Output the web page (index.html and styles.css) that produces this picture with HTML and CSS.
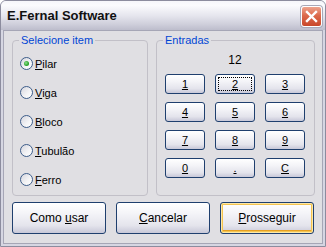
FILE: index.html
```html
<!DOCTYPE html>
<html lang="pt-BR">
<head>
    <meta charset="UTF-8">
    <meta name="viewport" content="width=device-width, initial-scale=1.0">
    <title>E.Fernal Software</title>
    <link rel="stylesheet" href="styles.css">
</head>
<body>
    <div class="window">
        <div class="titlebar">
            <span class="title">E.Fernal Software</span>
            <span class="close">
                <svg width="13" height="13" viewBox="0 0 13 13">
                    <path d="M2 2 L11 11 M11 2 L2 11" stroke="#fff" stroke-width="2.4" stroke-linecap="square" fill="none"/>
                </svg>
            </span>
        </div>
        <div class="client">
            <div class="groups">
                <fieldset class="group items">
                    <legend>Selecione item</legend>
                    <label class="radio checked"><span class="circle"></span><span><u>P</u>ilar</span></label>
                    <label class="radio"><span class="circle"></span><span><u>V</u>iga</span></label>
                    <label class="radio"><span class="circle"></span><span><u>B</u>loco</span></label>
                    <label class="radio"><span class="circle"></span><span><u>T</u>ubulão</span></label>
                    <label class="radio"><span class="circle"></span><span><u>F</u>erro</span></label>
                </fieldset>
                <fieldset class="group entries">
                    <legend>Entradas</legend>
                    <div class="display">12</div>
                    <div class="keypad">
                        <button class="key"><u>1</u></button>
                        <button class="key focused"><u>2</u></button>
                        <button class="key"><u>3</u></button>
                        <button class="key"><u>4</u></button>
                        <button class="key"><u>5</u></button>
                        <button class="key"><u>6</u></button>
                        <button class="key"><u>7</u></button>
                        <button class="key"><u>8</u></button>
                        <button class="key"><u>9</u></button>
                        <button class="key"><u>0</u></button>
                        <button class="key"><u>.</u></button>
                        <button class="key"><u>C</u></button>
                    </div>
                </fieldset>
            </div>
            <div class="actions">
                <button class="btn">Como <u>u</u>sar</button>
                <button class="btn"><u>C</u>ancelar</button>
                <button class="btn default"><u>P</u>rosseguir</button>
            </div>
        </div>
    </div>
</body>
</html>
```

FILE: styles.css
```css
body {
    margin: 0;
    font-family: "Liberation Sans", Arial, sans-serif;
    font-size: 11px;
    color: #000;
}
.window {
    width: 326px;
    height: 247px;
    box-sizing: border-box;
    border: 1px solid #8c8c9e;
    border-radius: 6px 6px 0 0;
    background: #d6d6e2;
    display: flex;
    flex-direction: column;
}
.titlebar {
    height: 29px;
    flex: none;
    display: flex;
    align-items: center;
    justify-content: space-between;
    padding: 0 3px 0 6px;
    border-radius: 5px 5px 0 0;
    background: linear-gradient(to bottom, #f6f6fa 0, #fbfbfd 15%, #e6e6ee 50%, #cfcfdb 80%, #bdbdcc 100%);
}
.title {
    font-size: 13px;
    font-weight: bold;
    color: #111;
}
.close {
    width: 19px;
    height: 19px;
    border: 1px solid #fff;
    border-radius: 3px;
    box-shadow: 0 0 0 1px #a8a8b8;
    background: linear-gradient(to bottom, #eea48e 0, #dc6a4c 45%, #c9472a 100%);
    display: flex;
    align-items: center;
    justify-content: center;
    margin-top: 1px;
}
.client {
    flex: 1;
    margin: 0 2px 2px;
    border: 1px solid #a6a6b6;
    background: #e0dfe3;
    padding: 2px 7px 0 8px;
}
.groups {
    display: flex;
    gap: 8px;
}
.group {
    margin: 0;
    border: 1px solid #c2c0c8;
    border-radius: 4px;
    padding: 0;
}
.group legend {
    color: #0046d5;
    line-height: 14px;
    padding: 0 2px;
}
.items {
    width: 136px;
    box-sizing: border-box;
    padding: 2px 0 1px 6px;
}
.radio {
    height: 29px;
    display: flex;
    align-items: center;
    gap: 2px;
    padding-left: 1px;
}
.circle {
    width: 13px;
    height: 13px;
    box-sizing: border-box;
    border: 1px solid #3d5d8a;
    border-radius: 50%;
    background: linear-gradient(135deg, #d6d6de 0, #f4f4f6 60%, #fff 100%);
    display: flex;
    align-items: center;
    justify-content: center;
}
.checked .circle::after {
    content: "";
    width: 5px;
    height: 5px;
    border-radius: 50%;
    background: radial-gradient(circle at 40% 40%, #8ee08e 0, #2ba42b 60%, #1c8a1c 100%);
}
.entries {
    width: 159px;
    box-sizing: border-box;
    padding: 0 0 0 6px;
}
.display {
    height: 27px;
    line-height: 27px;
    text-align: center;
    font-size: 12px;
    margin-left: 2px;
    width: 140px;
}
.keypad {
    margin-left: 2px;
    display: grid;
    grid-template-columns: repeat(3, 40px);
    grid-auto-rows: 20px;
    column-gap: 10px;
    row-gap: 8px;
}
.key, .btn {
    font-family: "Liberation Sans", Arial, sans-serif;
    font-size: 11px;
    color: #000;
    padding: 0;
    border: 1px solid #1f3f6e;
    border-radius: 3px;
    background: linear-gradient(to bottom, #ffffff 0, #f4f4f8 35%, #e4e4ec 75%, #c8c8d8 100%);
    cursor: pointer;
}
.focused {
    outline: 1px dotted #000;
    outline-offset: -4px;
}
.actions {
    display: flex;
    gap: 10px;
    margin-top: 6px;
}
.btn {
    width: 94px;
    height: 32px;
    font-size: 12px;
}
.default {
    box-shadow: inset 0 0 0 1px #fde8a8, inset 0 0 0 2px #f4c450, inset 0 -2px 0 1px #e8a020;
}
```
